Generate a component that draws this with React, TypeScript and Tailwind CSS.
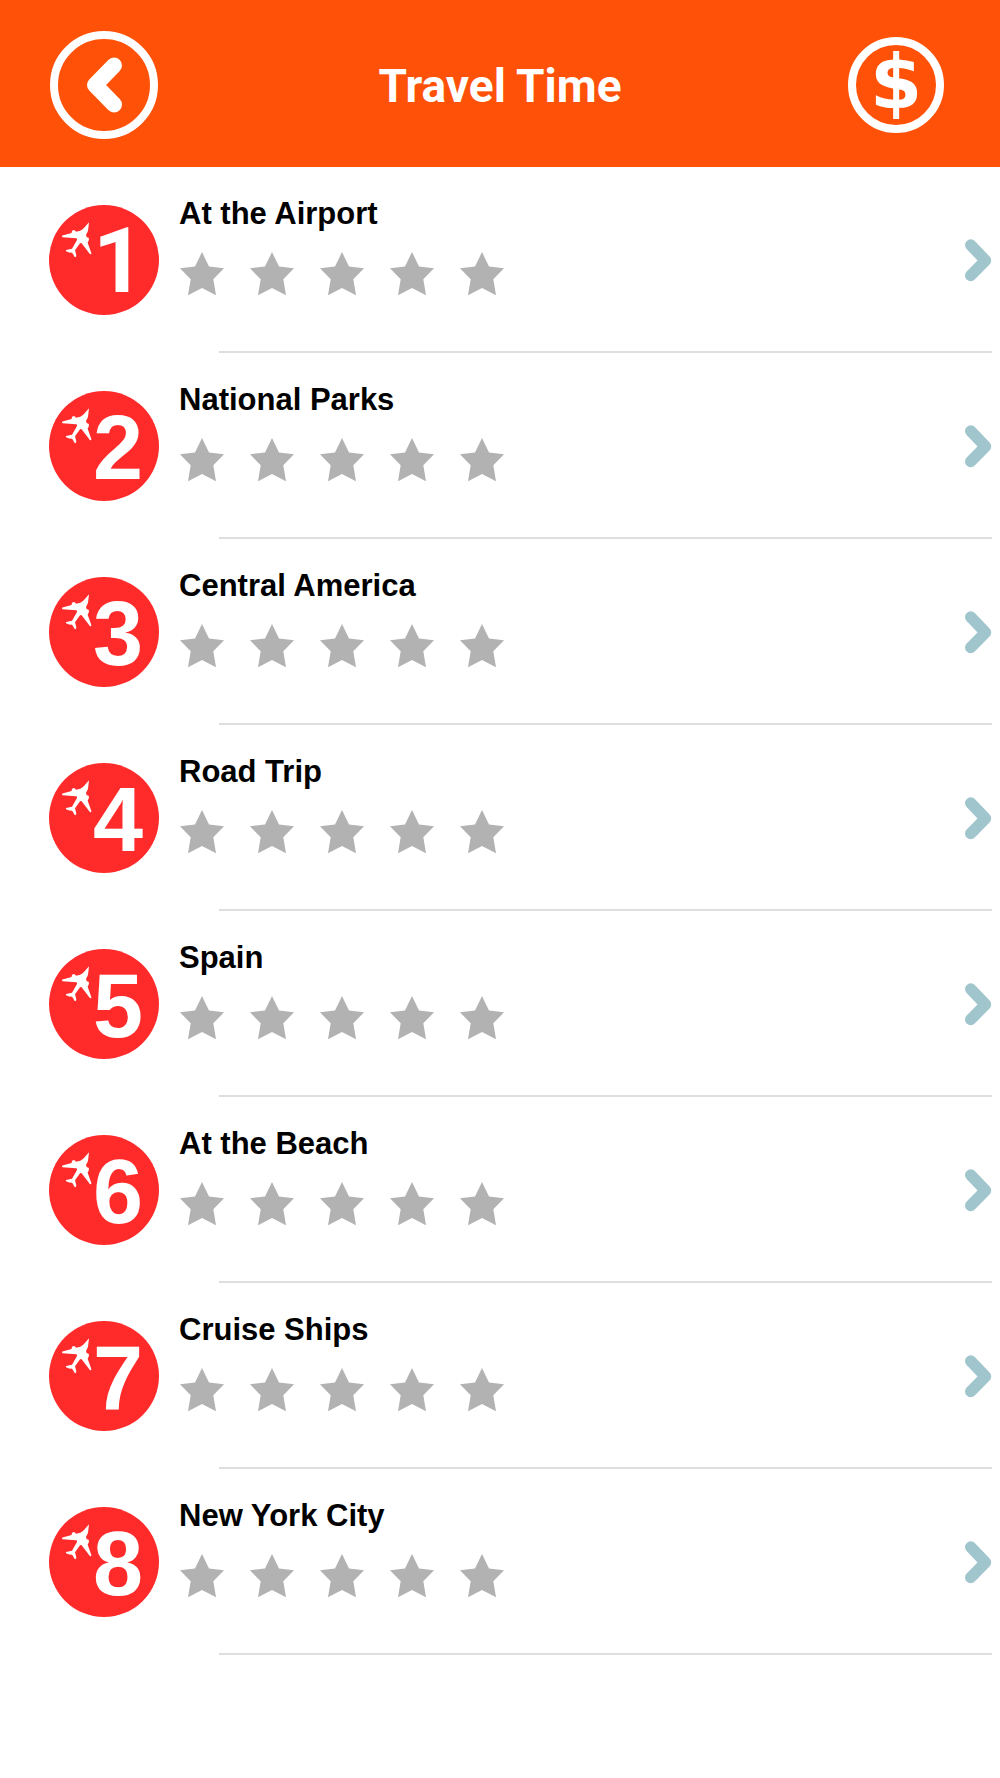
import clsx from "clsx";

const lessons = ["At the Airport", "National Parks", "Central America", "Road Trip", "Spain", "At the Beach", "Cruise Ships", "New York City"];

const STARS = [1, 2, 3, 4, 5];

const Star = () => (
  <svg viewBox="-1 0 46 44" className="h-11 w-[46px] fill-[#b2b2b2]" aria-hidden="true">
    <path d="M22 0L29 14.5L44 16.3L33.3 27.3L36 43.3L22 36L8 43.3L10.7 27.3L0 16.3L15 14.5Z" />
  </svg>
);

const Plane = () => (
  <svg viewBox="18 20 90 108" className="h-9 w-[30px] fill-white" aria-hidden="true">
    <path d="M99 21L96 46Q93 54 90 58L92 66Q98 66 99 70L98 76Q96 79 95 82L106 113Q106 119 101 115L77 84Q73 82 71 85L57 105L61 120Q61 127 56 125L49 113Q46 110 42 112L30 108Q28 103 34 103L48 100L63 74Q64 69 60 69L20 66Q15 62 22 60L47 53Q46 46 52 44Q58 44 60 49L73 46Q80 44 86 36Z" />
  </svg>
);

interface LessonRowProps {
  number: number;
  title: string;
}

const LessonRow = ({ number, title }: LessonRowProps) => {
  return (
    <li>
      <a href={`#lesson-${number}`} className="flex h-[184px] pl-[49px] pr-2">
        {/* Numbered badge */}
        <span className="mt-[38px] flex size-[110px] shrink-0 rounded-full bg-[#ff2b2b] pl-[13px] text-white">
          <span className="mt-[17px] w-[31px] shrink-0">
            <Plane />
          </span>
          {/* the numeral one is set in Roboto, which draws it without a foot */}
          <span className={clsx("text-[90px] leading-[114px] font-bold", number === 1 && "font-['Roboto',sans-serif]")}>{number}</span>
        </span>

        {/* Title and rating */}
        <span className="ml-5 flex-1 pt-7">
          <span className="block text-[31px] leading-[38px] font-bold text-black">{title}</span>
          <span className="mt-[19px] flex gap-6" role="img" aria-label="0 of 5 stars">
            {STARS.map((n) => (
              <Star key={n} />
            ))}
          </span>
        </span>

        <svg viewBox="0 0 27 43" className="mt-[72px] h-[43px] w-[27px] shrink-0" aria-hidden="true">
          <path d="M5.7 6L20.5 21.5L5.7 36.5" fill="none" stroke="#a0c5cc" strokeWidth="11.4" strokeLinecap="round" strokeLinejoin="round" />
        </svg>
      </a>
      <div className="mr-2 ml-[219px] h-[2px] bg-[#dedede]" />
    </li>
  );
};

const App = () => {
  return (
    <div className="min-h-screen bg-white font-['Liberation_Sans',Arial,sans-serif]">
      <header className="grid h-[167px] grid-cols-[1fr_auto_1fr] items-center bg-[#ff5208] px-[50px] pt-[2px] text-white">
        <button type="button" aria-label="Back" className="flex size-[108px] items-center justify-center rounded-full border-8 border-white">
          <svg viewBox="0 0 36 56" className="h-14 w-9" aria-hidden="true">
            <path d="M28 8.5L9 28L28 47.5" fill="none" stroke="white" strokeWidth="16" strokeLinecap="round" strokeLinejoin="round" />
          </svg>
        </button>
        <h1 className="pt-1 font-['Roboto',sans-serif] text-[46px] font-bold">Travel Time</h1>
        <button
          type="button"
          aria-label="Store"
          className="mr-1.5 flex size-24 items-center justify-center justify-self-end rounded-full border-8 border-white pb-1 font-['DejaVu_Sans',sans-serif] text-[75px] leading-none font-bold"
        >
          $
        </button>
      </header>
      <ul>
        {lessons.map((title, i) => (
          <LessonRow key={title} number={i + 1} title={title} />
        ))}
      </ul>
    </div>
  );
};

export default App;
